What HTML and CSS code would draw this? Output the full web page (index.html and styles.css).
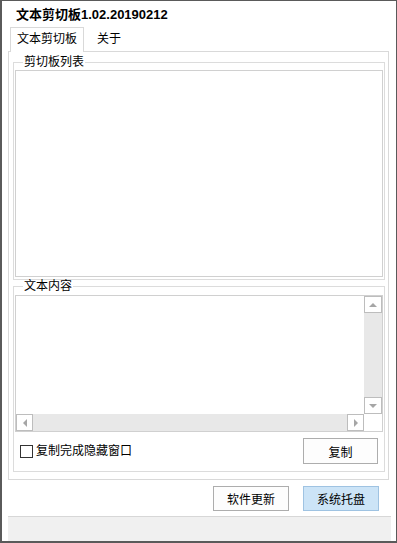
FILE: index.html
```html
<!DOCTYPE html>
<html lang="zh-CN">
<head>
  <meta charset="UTF-8">
  <meta name="viewport" content="width=device-width, initial-scale=1.0">
  <title>文本剪切板</title>
  <link rel="stylesheet" href="styles.css">
</head>
<body>
  <div class="window">
    <div class="title">文本剪切板1.02.20190212</div>

    <div class="tabs">
      <div class="tab tab-active">文本剪切板</div>
      <div class="tab">关于</div>
    </div>

    <div class="tab-page">
      <fieldset class="group group-list">
        <legend>剪切板列表</legend>
        <div class="listbox"></div>
      </fieldset>

      <fieldset class="group group-text">
        <legend>文本内容</legend>
        <div class="textbox">
          <div class="text-area"></div>
          <div class="vscroll">
            <span class="arrow-box"><span class="arrow arrow-up"></span></span>
            <span class="arrow-box"><span class="arrow arrow-down"></span></span>
          </div>
          <div class="hscroll">
            <span class="arrow-box"><span class="arrow arrow-left"></span></span>
            <span class="arrow-box"><span class="arrow arrow-right"></span></span>
          </div>
          <div class="corner"></div>
        </div>
        <div class="group-row">
          <label class="check"><span class="check-box"></span>复制完成隐藏窗口</label>
          <button class="btn">复制</button>
        </div>
      </fieldset>
    </div>

    <div class="actions">
      <button class="btn">软件更新</button>
      <button class="btn btn-focus">系统托盘</button>
    </div>

    <div class="status"></div>
  </div>
</body>
</html>
```

FILE: styles.css
```css
* {
  box-sizing: border-box;
}

body {
  margin: 0;
  font-family: 'Liberation Sans', 'Noto Sans CJK SC', sans-serif;
  font-size: 12px;
  color: #000;
  background: #fff;
}

.window {
  width: 397px;
  height: 543px;
  border: 1px solid #5a5a5a;
  border-left-width: 2px;
  border-bottom-width: 2px;
  background: #fff;
  display: flex;
  flex-direction: column;
}

.title {
  height: 26px;
  padding-left: 14px;
  padding-top: 6px;
  font-size: 13px;
  font-weight: bold;
  line-height: 16px;
}

.tabs {
  height: 24px;
  display: flex;
  padding-left: 8px;
}

.tab {
  height: 24px;
  padding: 0 13px;
  line-height: 24px;
}

.tab-active {
  position: relative;
  z-index: 1;
  height: 25px;
  padding: 0 6px 0 6px;
  border: 1px solid #d9d9d9;
  border-bottom: none;
  background: #fff;
  line-height: 22px;
}

.tab-page {
  height: 429px;
  margin: 0 7px 0 6px;
  padding: 4px 3px 7px 4px;
  border: 1px solid #d9d9d9;
}

.group {
  margin: 0;
  min-inline-size: 0;
  border: 1px solid #dcdcdc;
}

.group legend {
  margin-left: 8px;
  padding: 0 1px;
  line-height: 12px;
}

.group-list {
  padding: 2px 1px 2px 1px;
}

.group-text {
  padding: 3px 1px 7px 1px;
}

.listbox {
  height: 207px;
  border: 1px solid #d0d0d0;
}

.textbox {
  height: 137px;
  border: 1px solid #d0d0d0;
  display: grid;
  grid-template-columns: 1fr 18px;
  grid-template-rows: 1fr 17px;
}

.vscroll,
.hscroll {
  display: flex;
  justify-content: space-between;
  background: #e8e8e8;
}

.vscroll {
  flex-direction: column;
}

.corner {
  background: #fff;
}

.arrow-box {
  display: flex;
  align-items: center;
  justify-content: center;
  border: 1px solid #bdbdbd;
  background: #fff;
}

.vscroll .arrow-box {
  height: 17px;
}

.hscroll .arrow-box {
  width: 17px;
}

.arrow {
  width: 0;
  height: 0;
  border: 4px solid transparent;
}

.arrow-up {
  border-top: none;
  border-bottom-color: #a6a6a6;
}

.arrow-down {
  border-bottom: none;
  border-top-color: #a6a6a6;
}

.arrow-left {
  border-left: none;
  border-right-color: #a6a6a6;
}

.arrow-right {
  border-right: none;
  border-left-color: #a6a6a6;
}

.group-row {
  display: flex;
  align-items: center;
  justify-content: space-between;
  margin-top: 6px;
  padding: 0 5px 0 5px;
}

.check {
  display: flex;
  align-items: center;
  gap: 3px;
  line-height: 14px;
}

.check-box {
  width: 13px;
  height: 13px;
  border: 1px solid #333;
  background: #fff;
}

.btn {
  width: 75px;
  height: 26px;
  padding: 0;
  border: 1px solid #adadad;
  background: #fdfdfd;
  font-family: inherit;
  font-size: 12px;
  color: #000;
}

.btn-focus {
  background: #cce4f7;
  border-color: #9fc3e2;
}

.actions {
  display: flex;
  justify-content: flex-end;
  gap: 14px;
  padding: 6px 17px 5px 0;
}

.actions .btn {
  width: 76px;
  height: 25px;
}

.status {
  height: 25px;
  margin: 0 5px 0 6px;
  border-top: 1px solid #d7d7d7;
  background: #f0f0f0;
}
```
